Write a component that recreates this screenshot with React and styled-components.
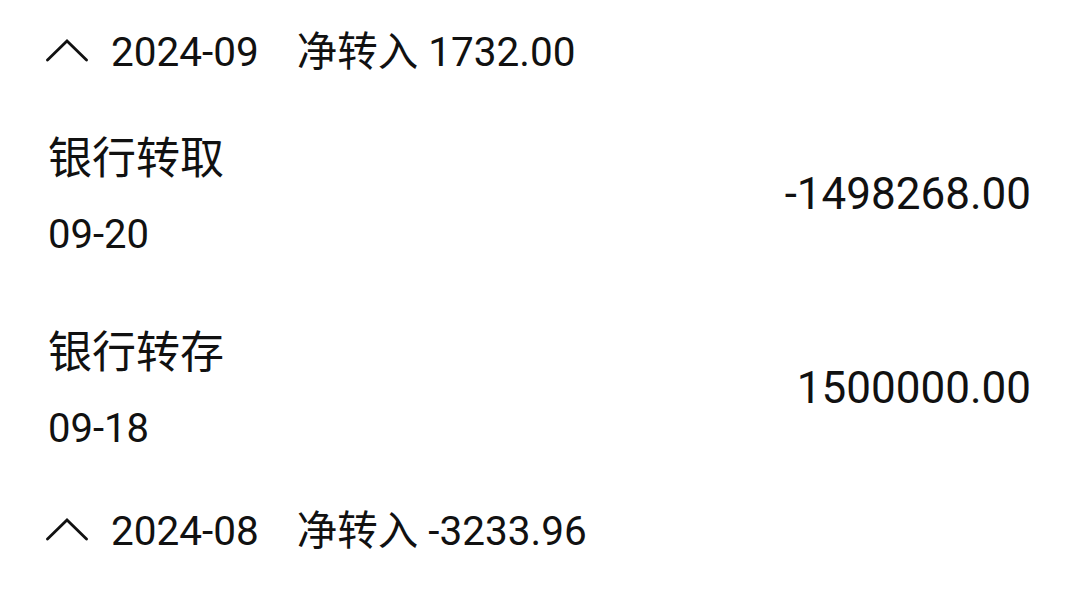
import styled, { createGlobalStyle } from "styled-components";

const GlobalStyle = createGlobalStyle`
  html, body {
    margin: 0;
    padding: 0;
    background: #fff;
  }
  body {
    font-family: Roboto, "Noto Sans CJK SC", sans-serif;
    color: #111;
  }
`;

const months = [
  {
    month: "2024-09",
    net: "1732.00",
    items: [
      { title: "银行转取", date: "09-20", amount: "-1498268.00" },
      { title: "银行转存", date: "09-18", amount: "1500000.00" },
    ],
  },
  { month: "2024-08", net: "-3233.96", items: [] },
];

const Chevron = () => (
  <svg width="42" height="24" viewBox="0 0 42 24">
    <polyline
      points="1.5,22 21,3 40.5,22"
      fill="none"
      stroke="#111"
      strokeWidth="2.8"
      strokeLinecap="round"
    />
  </svg>
);

export default function App() {
  return (
    <Page>
      <GlobalStyle />
      {months.map((m) => (
        <Section key={m.month}>
          <MonthHeader>
            <Chevron />
            <Month>{m.month}</Month>
            <Net>净转入 {m.net}</Net>
          </MonthHeader>
          {m.items.map((item) => (
            <Row key={item.date}>
              <Info>
                <Title>{item.title}</Title>
                <DateText>{item.date}</DateText>
              </Info>
              <Amount>{item.amount}</Amount>
            </Row>
          ))}
        </Section>
      ))}
    </Page>
  );
}

const Page = styled.div`
  width: 1080px;
  height: 610px;
  overflow: hidden;
  padding: 24px 49px 0 46px;
  box-sizing: border-box;
  display: flex;
  flex-direction: column;
  gap: 15px;
`;

const Section = styled.div`
  display: flex;
  flex-direction: column;
`;

const MonthHeader = styled.div`
  display: flex;
  align-items: center;
  height: 56px;
  margin-bottom: 20px;
  font-size: 40.5px;
  line-height: 1;
  > svg {
    margin: 0 23px 4px 0;
  }
`;

const Month = styled.span`
  margin-right: 38px;
`;

const Net = styled.span``;

const Row = styled.div`
  display: flex;
  align-items: center;
  justify-content: space-between;
  height: 194px;
  padding-left: 2px;
`;

const Info = styled.div`
  display: flex;
  flex-direction: column;
  gap: 22px;
`;

const Title = styled.div`
  font-size: 44px;
  line-height: 54px;
`;

const DateText = styled.div`
  font-size: 40px;
  line-height: 54px;
`;

const Amount = styled.div`
  font-size: 44px;
  line-height: 1;
  padding-bottom: 6px;
`;
